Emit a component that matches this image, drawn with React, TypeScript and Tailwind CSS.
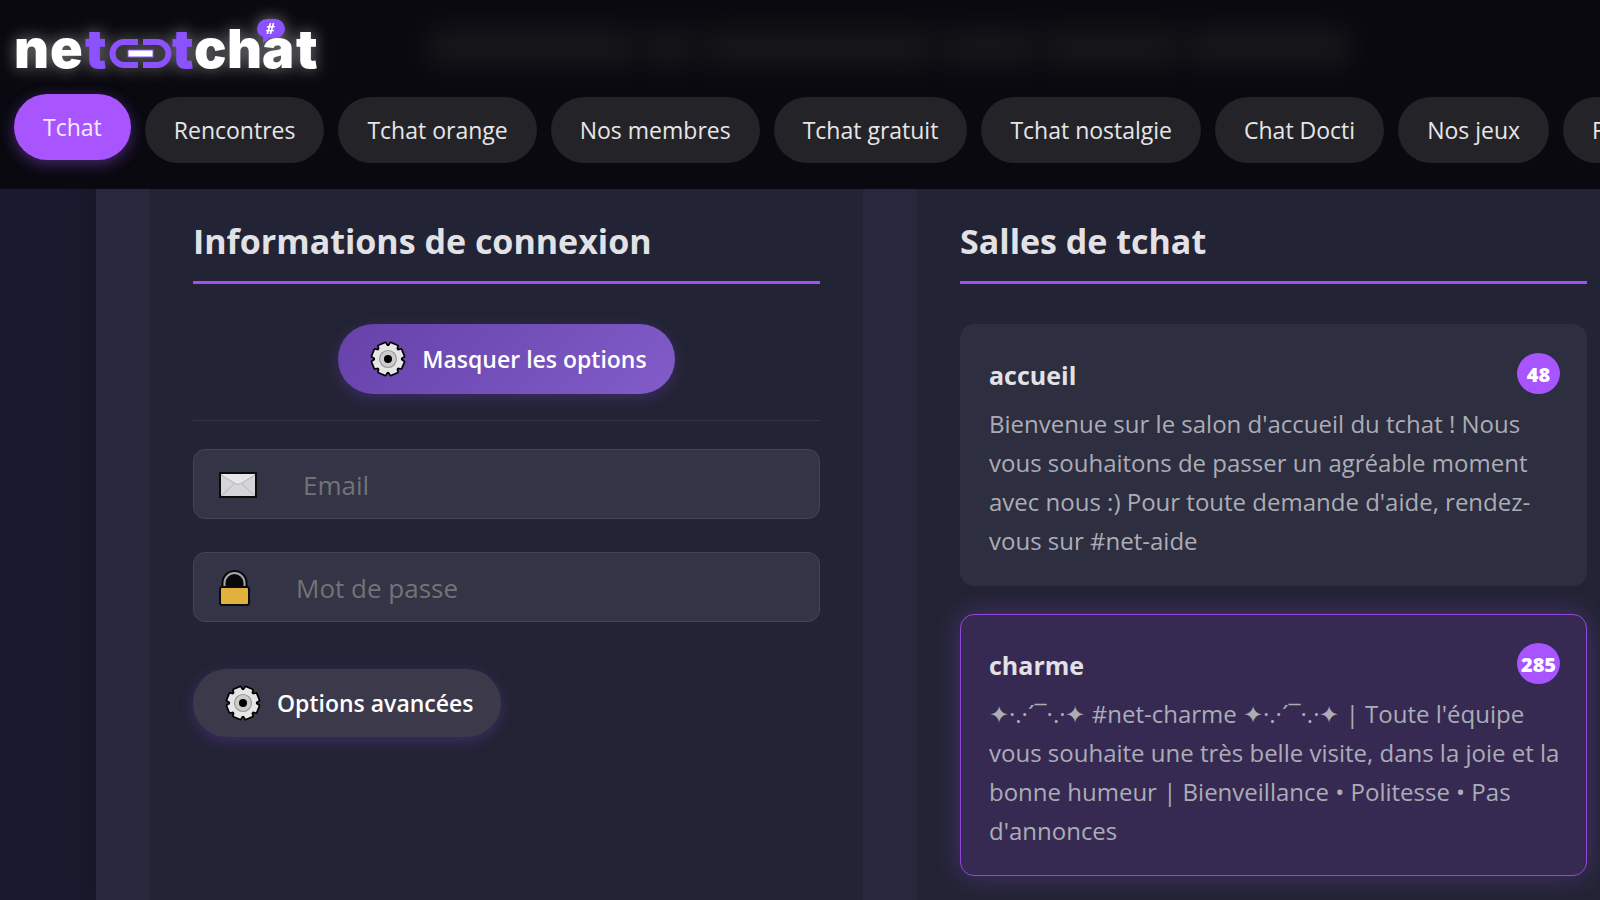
import React, { useState } from "react";

const links = [
  "Tchat",
  "Rencontres",
  "Tchat orange",
  "Nos membres",
  "Tchat gratuit",
  "Tchat nostalgie",
  "Chat Docti",
  "Nos jeux",
  "Forum",
];

const rooms = [
  {
    name: "accueil",
    count: 48,
    description:
      "Bienvenue sur le salon d'accueil du tchat ! Nous vous souhaitons de passer un agréable moment avec nous :) Pour toute demande d'aide, rendez-vous sur #net-aide",
  },
  {
    name: "charme",
    count: 285,
    description:
      "✦·.·´¯·.·✦ #net-charme ✦·.·´¯·.·✦ | Toute l'équipe vous souhaite une très belle visite, dans la joie et la bonne humeur | Bienveillance • Politesse • Pas d'annonces",
  },
];

function Logo() {
  return (
    <svg
      width="320"
      height="64"
      viewBox="0 0 320 64"
      role="img"
      aria-label="net tchat"
      className="overflow-visible drop-shadow-[0_0_8px_rgba(255,255,255,0.45)]"
    >
      <g className="font-['Inter'] text-[54px] font-black" fill="#ffffff">
        <text x="0 36" y="56">ne</text>
        <text x="71" y="56" fill="#8c52ff">t</text>
        <text x="158" y="56" fill="#8c52ff">t</text>
        <text x="180 213 248 282" y="56">chat</text>
      </g>
      <g fill="none" stroke="#8c52ff" strokeWidth="6">
        <path d="M124 30H110a11.500 11.500 0 0 0 0 23H124" />
        <path d="M129 30H143a11.500 11.500 0 0 1 0 23H129" />
      </g>
      <rect x="114" y="38" width="25" height="7" fill="#ffffff" stroke="#8c52ff" strokeWidth="1" />
      <path
        d="M253 7h8a10 10 0 0 1 10 10a9 9 0 0 1-9 9h-6l-7 5v-6a9 9 0 0 1-6-8a10 10 0 0 1 10-10z"
        fill="#8c52ff"
      />
      <text x="252" y="22" fill="#ffffff" className="font-['Lato'] text-[15px] font-black italic">
        #
      </text>
    </svg>
  );
}

const teeth = [22.5, 67.5, 112.5, 157.5, 202.5, 247.5, 292.5, 337.5];

function GearShape() {
  return (
    <>
      <circle cx="18" cy="18" r="13" />
      {teeth.map(angle => (
        <path key={angle} d="M14.500 2.500h7l1 6h-9z" transform={`rotate(${angle} 18 18)`} />
      ))}
    </>
  );
}

function GearIcon() {
  return (
    <svg width="36" height="36" viewBox="0 0 36 36" aria-hidden="true" className="shrink-0">
      <g fill="#000000" stroke="#000000" strokeWidth="3.500" strokeLinejoin="round">
        <GearShape />
      </g>
      <g fill="#e6e6e6">
        <GearShape />
      </g>
      <circle cx="18" cy="18" r="8.500" fill="#cccccc" stroke="#999999" strokeWidth="1.200" />
      <circle cx="18" cy="18" r="4" fill="#000000" />
    </svg>
  );
}

function MailIcon() {
  return (
    <svg width="38" height="26" viewBox="0 0 38 26" aria-hidden="true" className="shrink-0">
      <rect x="1" y="1" width="36" height="24" fill="#d6d6d8" stroke="#0c0c0e" strokeWidth="2" />
      <path d="M2 2h34L22 11.500q-3 2-6 0z" fill="#e6e6e8" />
      <path d="M2 3l14 8.500q3 2 6 0L36 3M2 24l13-12M36 24L23 12" fill="none" stroke="#b4b4b8" strokeWidth="1" />
    </svg>
  );
}

function LockIcon() {
  return (
    <svg width="31" height="36" viewBox="0 0 31 36" aria-hidden="true" className="shrink-0">
      <path d="M2.500 18V13a13 13 0 0 1 26 0v5z" fill="#08080a" />
      <path d="M5.500 19V13a10 10 0 0 1 20 0v6" fill="none" stroke="#a8a8aa" strokeWidth="2" />
      <rect x="1" y="17" width="29" height="18" rx="2" fill="#e0b13c" stroke="#0c0c0e" strokeWidth="2" />
    </svg>
  );
}

function Field({ icon, label, type }: { icon: React.ReactNode; label: string; type: string }) {
  return (
    <label className="flex h-[70px] items-center gap-[46px] rounded-xl border border-[#434455] bg-[#333445] pt-0.5 pl-[25px]">
      {icon}
      <input
        type={type}
        aria-label={label}
        placeholder={label}
        className="h-full min-w-0 flex-1 bg-transparent text-[26px] text-white outline-none placeholder:text-[#737376]"
      />
    </label>
  );
}

function PanelTitle({ children }: { children: React.ReactNode }) {
  return (
    <h2 className="border-b-3 border-[#a24ff5] pt-7 pb-[15px] text-[34px] leading-[49px] font-bold text-[#e2e2e6]">
      {children}
    </h2>
  );
}

export default function App() {
  const [active, setActive] = useState("Tchat");
  const [selected, setSelected] = useState("charme");

  return (
    <div className="flex h-screen flex-col overflow-hidden bg-[#191a2d] font-['Open_Sans','Noto_Sans',sans-serif]">
      <header className="relative z-10 flex h-[189px] shrink-0 flex-col bg-[#09090f]">
        {/* halo behind the header */}
        <div
          aria-hidden="true"
          className="absolute inset-x-0 top-[30px] flex h-[34px] gap-3 pr-[252px] pl-[430px] opacity-60 blur-[14px]"
        >
          <div className="flex-[195] bg-[#242426]" />
          <div className="flex-[47] bg-[#222225]" />
          <div className="flex-[218] bg-[#242424]" />
          <div className="flex-[87] bg-[#222225]" />
          <div className="flex-[126] bg-[#242424]" />
          <div className="flex-[153] bg-[#242426]" />
        </div>
        <a href="#" className="relative mt-3 ml-[14px] w-fit">
          <Logo />
        </a>
        <nav className="relative mt-[21px] flex gap-[14px] px-[14px]">
          {links.map(link => (
            <a
              key={link}
              href="#"
              onClick={() => setActive(link)}
              className={`flex h-[66px] shrink-0 items-center rounded-full px-[29px] text-[23px] ${
                active === link
                  ? "-translate-y-[3px] bg-[#a855ff] text-[#f4eaff] shadow-[0_4px_15px_rgba(168,85,255,0.4)]"
                  : "bg-[#242428] text-[#e6e6e8]"
              }`}
            >
              {link}
            </a>
          ))}
        </nav>
      </header>

      <main className="ml-24 min-h-0 flex-1 bg-[#27283b] pl-[54px] shadow-[0_0_30px_rgba(0,0,0,0.3)]">
        <div className="-mr-[30px] grid h-full grid-cols-2 gap-[54px]">
          {/* connexion */}
          <section className="bg-[#222334] px-[43px]">
            <PanelTitle>Informations de connexion</PanelTitle>
            <div className="mt-10 flex justify-center border-b border-[#343546] pb-[26px]">
              <button className="flex h-[70px] items-center gap-4 rounded-full bg-linear-135 from-[#6541a8] to-[#825dca] pr-7 pl-8 text-[23px] font-semibold text-white shadow-[0_4px_15px_rgba(120,70,210,0.3)]">
                <GearIcon />
                Masquer les options
              </button>
            </div>
            <form className="mt-7 flex flex-col gap-[33px]">
              <Field icon={<MailIcon />} label="Email" type="email" />
              <Field icon={<LockIcon />} label="Mot de passe" type="password" />
            </form>
            <button className="mt-[47px] flex h-[68px] items-center gap-4 rounded-full bg-[#3b394a] pr-7 pl-8 text-[23px] font-semibold text-white shadow-[0_4px_15px_rgba(120,70,210,0.3)]">
              <GearIcon />
              Options avancées
            </button>
          </section>

          {/* salons */}
          <section className="bg-[#222334] px-[43px]">
            <PanelTitle>Salles de tchat</PanelTitle>
            <div className="mt-10 flex flex-col gap-7">
              {rooms.map(({ name, count, description }) => (
                <button
                  key={name}
                  onClick={() => setSelected(name)}
                  className={`rounded-[14px] border pt-7 pr-[26px] pb-[25px] pl-7 text-left ${
                    selected === name
                      ? "border-[#9146dc] bg-[#362a53] shadow-[0_0_28px_rgba(168,85,247,0.3)]"
                      : "border-[#2d2e3f] bg-[#2d2e3f]"
                  }`}
                >
                  <div className="flex h-[41px] items-center justify-between">
                    <h3 className="pt-1 text-[25px] font-bold text-[#e2e2e6]">{name}</h3>
                    <span className="flex h-[41px] w-[43px] items-center justify-center rounded-[50%] bg-[#a855ff] pt-0.5 text-[20px] font-extrabold text-white">
                      {count}
                    </span>
                  </div>
                  <p className="mt-[10px] text-[24px] leading-[39px] text-[#acacb6]">{description}</p>
                </button>
              ))}
            </div>
          </section>
        </div>
      </main>
    </div>
  );
}
